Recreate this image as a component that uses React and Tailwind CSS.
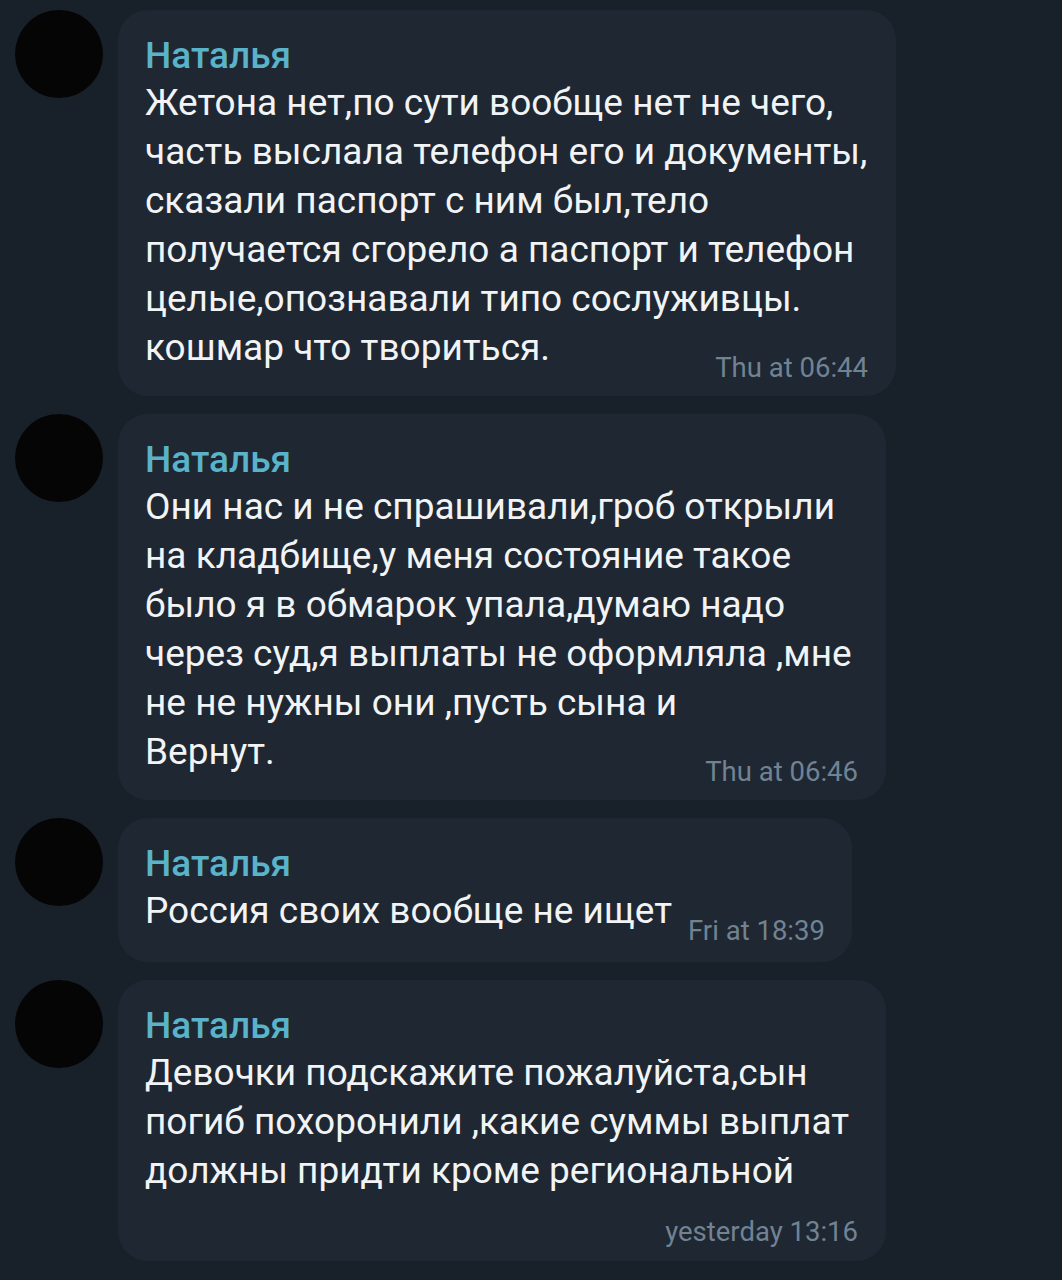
import React from "react";

const messages = [
  {
    width: "w-[778px]",
    pb: "pb-[24px]",
    lines: [
      "Жетона нет,по сути вообще нет не чего,",
      "часть выслала телефон его и документы,",
      "сказали паспорт с ним был,тело",
      "получается сгорело а паспорт и телефон",
      "целые,опознавали типо сослуживцы.",
      "кошмар что твориться.",
    ],
    time: "Thu at 06:44",
    inline: true,
  },
  {
    width: "w-[768px]",
    pb: "pb-[24px]",
    lines: [
      "Они нас и не спрашивали,гроб открыли",
      "на кладбище,у меня состояние такое",
      "было я в обмарок упала,думаю надо",
      "через суд,я выплаты не оформляла ,мне",
      "не не нужны они ,пусть сына и",
      "Вернут.",
    ],
    time: "Thu at 06:46",
    inline: true,
  },
  {
    width: "w-[734px]",
    pb: "pb-[27px]",
    lines: ["Россия своих вообще не ищет"],
    time: "Fri at 18:39",
    inline: true,
  },
  {
    width: "w-[768px]",
    pb: "pb-[24px]",
    lines: [
      "Девочки подскажите пожалуйста,сын",
      "погиб похоронили ,какие суммы выплат",
      "должны придти кроме региональной",
    ],
    time: "yesterday 13:16",
    inline: false,
  },
];

function Avatar() {
  return <div className="w-[88px] h-[88px] rounded-full bg-[#050505] shrink-0" />;
}

function Bubble({ msg }) {
  const body = msg.inline ? msg.lines.slice(0, -1) : msg.lines;
  const last = msg.lines[msg.lines.length - 1];

  return (
    <div className={`${msg.width} ${msg.pb} bg-[#1e2732] rounded-[30px] pl-[27px] pr-[28px] pt-[24px]`}>
      <div className="text-[37px] leading-[44px] font-medium text-[#5ab3c9]">Наталья</div>
      {body.map((line, i) => (
        <div key={i} className="text-[37px] leading-[49px] text-[#f1f3f5] whitespace-nowrap">
          {line}
        </div>
      ))}
      {msg.inline ? (
        <div className="flex items-end justify-between gap-[16px]">
          <div className="text-[37px] leading-[49px] text-[#f1f3f5] whitespace-nowrap">{last}</div>
          <div className="text-[27.5px] leading-[30px] text-[#718393] whitespace-nowrap -mb-[11px]">
            {msg.time}
          </div>
        </div>
      ) : (
        <div className="flex justify-end mt-[22px] -mb-[10px]">
          <div className="text-[27.5px] leading-[30px] text-[#718393] whitespace-nowrap">{msg.time}</div>
        </div>
      )}
    </div>
  );
}

export default function App() {
  return (
    <div
      className="w-[1062px] h-[1280px] bg-[#18202a] pl-[15px] pt-[10px] flex flex-col gap-[18px] overflow-hidden"
      style={{ fontFamily: "Roboto, 'Noto Sans', sans-serif" }}
    >
      {messages.map((msg, i) => (
        <div key={i} className="flex items-start gap-[15px]">
          <Avatar />
          <Bubble msg={msg} />
        </div>
      ))}
    </div>
  );
}
